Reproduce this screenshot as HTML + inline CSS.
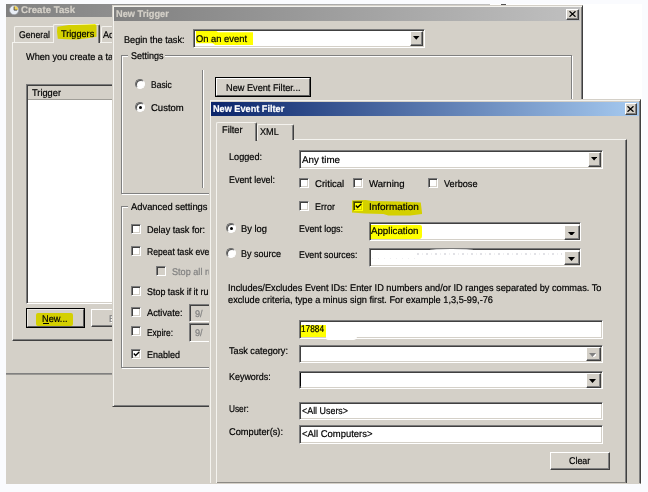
<!DOCTYPE html>
<html lang="en"><head><meta charset="utf-8"><title>Create Task</title>
<style>
*{box-sizing:border-box}
html,body{margin:0;padding:0}
body{width:648px;height:492px;overflow:hidden;background:#fafbfe;position:relative;font-family:"Liberation Sans",sans-serif;font-size:9.75px;color:#000;line-height:12px}
#root{position:absolute;left:0;top:0;width:648px;height:492px;overflow:hidden;background:#fafbfe;filter:blur(0.4px)}
.a{position:absolute}
.win{position:absolute;overflow:hidden;background:#d4d0c8}
.t{position:absolute;white-space:pre;height:12px;line-height:12px;-webkit-text-stroke:0.2px;text-rendering:geometricPrecision;transform-origin:0 0}
.b{font-weight:bold}
.sk{position:absolute;background:#fff;border:1px solid;border-color:#7b7b7b #fff #fff #7b7b7b;box-shadow:inset 1px 1px 0 #404040,inset -1px -1px 0 #d4d0c8}
.rs{position:absolute;background:#d4d0c8;border:1px solid;border-color:#fff #404040 #404040 #fff;box-shadow:inset -1px -1px 0 #808080}
.df{position:absolute;background:#000;}
.cb{position:absolute;width:10px;height:10px;background:#fff;border:1px solid;border-color:#7b7b7b #fff #fff #7b7b7b;box-shadow:inset 1px 1px 0 #404040,inset -1px -1px 0 #d4d0c8}
.rd{position:absolute;width:10px;height:10px;border-radius:50%;background:#fff;border:1px solid;border-color:#6a6a6a #fff #fff #6a6a6a;box-shadow:inset 1px 1px 0 #505050}
.rd i{position:absolute;left:2.5px;top:2.5px;width:3px;height:3px;border-radius:50%;background:#000}
.gb{position:absolute;border:1px solid #808080;box-shadow:1px 1px 0 #fff,inset 1px 1px 0 #fff}
.hl{position:absolute;background:#ffff00;mix-blend-mode:multiply}
.tab{position:absolute;background:#d4d0c8;border:1px solid;border-color:#f4f2ee #404040 transparent #f4f2ee;border-bottom:none;border-radius:2px 2px 0 0;box-shadow:inset -1px 0 0 #808080}
.arr{position:absolute;width:0;height:0;border-left:3px solid transparent;border-right:3px solid transparent;border-top:3px solid #000}
</style></head>
<body>
<div id="root">
<div class="a" style="left:6px;top:4px;width:636px;height:480px;background:#fff"></div>
<div class="win" style="left:6px;top:4px;width:484px;height:480px;">
<div class="a" style="left:0px;top:0px;width:484px;height:13px;background:linear-gradient(to right,#808080,#c0c0c0)"></div>
<svg class="a" style="left:2.5px;top:1.2000000000000002px" width="10.2" height="10.2" viewBox="0 0 10 10"><circle cx="5" cy="5" r="4.5" fill="#e9eef6" stroke="#9a9ca4" stroke-width="0.7"/><path d="M5 5 L5 1 A4 4 0 0 1 9 5 Z" fill="#f0d25a"/><path d="M5 1.6 V5 H8" stroke="#333" stroke-width="0.8" fill="none"/></svg>
<span class="t b" style="left:15px;top:1.00px;transform:scaleX(0.9897);color:#d4d0c8">Create Task</span>
<div class="a" style="left:6px;top:38px;width:472px;height:299px;border:1px solid;border-color:#f4f3ef #404040 #404040 #f4f3ef;box-shadow:inset -1px -1px 0 #808080"></div>
<div class="tab" style="left:8px;top:22px;width:42px;height:16px;"></div>
<span class="t " style="left:13px;top:26.00px;transform:scaleX(0.8937);">General</span>
<div class="tab" style="left:95px;top:22px;width:39px;height:16px;"></div>
<span class="t " style="left:97px;top:26.00px;transform:scaleX(0.94);">Actions</span>
<div class="tab" style="left:47px;top:20px;width:47px;height:19px;"></div>
<div class="hl" style="left:51px;top:20px;width:39.5px;height:15.5px;clip-path:polygon(1% 18%,30% 6%,42% 7%,76% 3%,96% 0,100% 6%,100% 82%,78% 92%,50% 100%,25% 98%,2% 95%,0 50%)"></div>
<span class="t " style="left:54.5px;top:25.00px;transform:scaleX(0.9391);">Triggers</span>
<span class="t " style="left:20px;top:48.00px;transform:scaleX(0.94);">When you create a task, you can specify the conditions that will trigger the task.</span>
<div class="sk" style="left:20px;top:80px;width:454px;height:220px;"></div>
<div class="a" style="left:22px;top:82px;width:462px;height:13.5px;background:#d4d0c8;border-bottom:1px solid #a09e98"></div>
<span class="t " style="left:26px;top:84.00px;transform:scaleX(0.9498);">Trigger</span>
<div class="df" style="left:20px;top:304px;width:59px;height:20px;"></div>
<div class="rs" style="left:21px;top:305px;width:57px;height:18px;border-color:#e9e7e2 #5a5a5a #5a5a5a #e9e7e2;box-shadow:none"></div>
<div class="hl" style="left:30px;top:309px;width:37px;height:13px;border-radius:2px"></div>
<span class="t " style="left:36px;top:310.00px;transform:scaleX(0.9412);">New...</span>
<div class="a" style="left:36.5px;top:319px;width:6.0px;height:1px;background:#000"></div>
<div class="rs" style="left:85px;top:305px;width:57px;height:18px;"></div>
<span class="t " style="left:102.5px;top:310.00px;transform:scaleX(0.94);color:#808080;text-shadow:1px 1px 0 #fff">Edit...</span>
<div class="a" style="left:0px;top:369px;width:484px;height:1px;background:#808080"></div>
<div class="a" style="left:0px;top:370px;width:484px;height:1px;background:#9a9894"></div>
</div>
<div class="a" style="left:501px;top:4px;width:5px;height:1px;background:#555"></div>
<div class="win" style="left:112px;top:5px;width:471px;height:402px;border:1px solid;border-color:#d4d0c8 #404040 #404040 #d4d0c8;box-shadow:inset 1px 1px 0 #f4f3ef,inset -1px -1px 0 #808080">
<div class="a" style="left:1px;top:1px;width:466px;height:14px;background:linear-gradient(to right,#808080,#c0c0c0)"></div>
<span class="t b" style="left:3px;top:3.00px;transform:scaleX(0.9451);color:#d4d0c8">New Trigger</span>
<div class="rs" style="left:453px;top:3px;width:13px;height:11px;"><svg class="a" style="left:2px;top:0.6px" width="7" height="6" viewBox="0 0 7 6"><path d="M0.5 0.3 L6.5 5.7 M6.5 0.3 L0.5 5.7" stroke="#000" stroke-width="1.25" fill="none"/></svg></div>
<span class="t " style="left:11px;top:29.00px;transform:scaleX(0.9380);">Begin the task:</span>
<div class="sk" style="left:80px;top:23px;width:232px;height:19px;"></div>
<div class="hl" style="left:82.6px;top:25px;width:57.400000000000006px;height:14px;clip-path:polygon(0 0,36% 0,39% 9%,100% 9%,100% 100%,34% 100%,30% 88%,0 88%)"></div>
<span class="t " style="left:83px;top:28.00px;transform:scaleX(0.9600);">On an event</span>
<div class="rs" style="left:297px;top:25px;width:13px;height:15px;"></div>
<svg class="a" style="left:300px;top:30.200000000000003px" width="6.5" height="3.8" viewBox="0 0 6.5 3.8"><path d="M0 0H6.5L3.25 3.8Z" fill="#000"/></svg>
<div class="gb" style="left:8px;top:49px;width:451px;height:139px;"></div>
<div class="a" style="left:15px;top:44px;width:37px;height:12px;background:#d4d0c8"></div>
<span class="t " style="left:17.5px;top:45.00px;transform:scaleX(0.9224);">Settings</span>
<div class="rd" style="left:22px;top:73px;"></div>
<span class="t " style="left:38px;top:74.00px;transform:scaleX(0.8702);">Basic</span>
<div class="rd" style="left:22px;top:96px;"><i></i></div>
<span class="t " style="left:38px;top:97.00px;transform:scaleX(0.9749);">Custom</span>
<div class="a" style="left:89px;top:64px;width:1px;height:118px;background:#808080"></div>
<div class="a" style="left:90px;top:64px;width:1px;height:118px;background:#fff"></div>
<div class="df" style="left:102px;top:71px;width:96px;height:20px;"></div>
<div class="rs" style="left:103px;top:72px;width:94px;height:18px;border-color:#fff #5a5a5a #5a5a5a #fff;box-shadow:none"></div>
<span class="t " style="left:113px;top:77.00px;transform:scaleX(0.9417);">New Event Filter...</span>
<div class="gb" style="left:8px;top:200px;width:451px;height:162px;"></div>
<div class="a" style="left:15px;top:195px;width:81px;height:12px;background:#d4d0c8"></div>
<span class="t " style="left:17.5px;top:196.00px;transform:scaleX(0.9600);">Advanced settings</span>
<div class="cb" style="left:18px;top:218px;"></div>
<span class="t " style="left:34px;top:219.00px;transform:scaleX(0.9306);">Delay task for:</span>
<div class="cb" style="left:18px;top:240px;"></div>
<span class="t " style="left:34px;top:241.00px;transform:scaleX(0.8841);">Repeat task every:</span>
<div class="cb" style="left:18px;top:280px;"></div>
<span class="t " style="left:34px;top:281.00px;transform:scaleX(0.9151);">Stop task if it runs longer than:</span>
<div class="cb" style="left:18px;top:301px;"></div>
<span class="t " style="left:34px;top:302.00px;transform:scaleX(0.9490);">Activate:</span>
<div class="cb" style="left:18px;top:320px;"></div>
<span class="t " style="left:34px;top:322.00px;transform:scaleX(0.8564);">Expire:</span>
<div class="cb" style="left:18px;top:343px;"><svg class="a" style="left:1px;top:1px" width="7" height="7" viewBox="0 0 7 7"><path d="M0.8 2.6 L2.6 4.5 L6.2 0.9" fill="none" stroke="#000" stroke-width="1.4"/></svg></div>
<span class="t " style="left:34px;top:344.00px;transform:scaleX(0.9219);">Enabled</span>
<div class="cb" style="left:43px;top:260px;background:#d4d0c8;width:9.5px;height:9.5px"></div>
<span class="t " style="left:59px;top:261.00px;transform:scaleX(0.9354);color:#808080">Stop all running tasks at end of repetition duration</span>
<div class="sk" style="left:76px;top:298px;width:111px;height:18px;background:#d4d0c8"></div>
<span class="t " style="left:81.5px;top:303.00px;transform:scaleX(0.94);color:#808080">9/    4/2013</span>
<div class="sk" style="left:76px;top:317px;width:111px;height:19px;background:#d4d0c8"></div>
<span class="t " style="left:81.5px;top:322.00px;transform:scaleX(0.94);color:#808080">9/    4/2014</span>
</div>
<div class="win" style="left:209px;top:99px;width:432px;height:385px;border:1px solid;border-color:#d4d0c8 #404040 #d4d0c8 #d4d0c8;box-shadow:inset 1px 1px 0 #f4f3ef,inset -1px 0 0 #808080">
<div class="a" style="left:1px;top:2px;width:428px;height:14px;background:linear-gradient(to right,#0a246a,#a6caf0)"></div>
<span class="t b" style="left:2.5px;top:4.00px;transform:scaleX(0.9392);color:#fff">New Event Filter</span>
<div class="rs" style="left:415px;top:3px;width:12px;height:12px;"><svg class="a" style="left:1.3px;top:1.8px" width="7" height="6" viewBox="0 0 7 6"><path d="M0.5 0.3 L6.5 5.7 M6.5 0.3 L0.5 5.7" stroke="#000" stroke-width="1.3" fill="none"/></svg></div>
<div class="a" style="left:6px;top:39px;width:411px;height:361px;border:1px solid;border-color:#f4f3ef #404040 #404040 #f4f3ef;box-shadow:inset -1px -1px 0 #808080"></div>
<div class="a" style="left:7px;top:382px;width:409px;height:2px;background:linear-gradient(#a6a39d,#3a3a3a)"></div>
<div class="tab" style="left:47px;top:24px;width:37px;height:16px;"></div>
<span class="t " style="left:50px;top:27.00px;transform:scaleX(0.9346);">XML</span>
<div class="tab" style="left:6px;top:22px;width:41px;height:19px;"></div>
<span class="t " style="left:12px;top:25.00px;transform:scaleX(0.9459);">Filter</span>
<span class="t " style="left:19px;top:52.00px;transform:scaleX(0.9362);">Logged:</span>
<div class="sk" style="left:89px;top:50px;width:304px;height:19px;"></div>
<span class="t " style="left:92px;top:55.00px;transform:scaleX(1.0016);">Any time</span>
<div class="rs" style="left:378px;top:52px;width:13px;height:15px;"></div>
<svg class="a" style="left:381.29999999999995px;top:57.30000000000001px" width="6.2" height="3.5" viewBox="0 0 6.2 3.5"><path d="M0 0H6.2L3.1 3.5Z" fill="#000"/></svg>
<span class="t " style="left:19px;top:75.00px;transform:scaleX(0.9126);">Event level:</span>
<div class="cb" style="left:89px;top:78px;"></div>
<span class="t " style="left:104.5px;top:79.00px;transform:scaleX(0.9816);">Critical</span>
<div class="cb" style="left:143px;top:78px;"></div>
<span class="t " style="left:159px;top:79.00px;transform:scaleX(0.9874);">Warning</span>
<div class="cb" style="left:218px;top:78px;"></div>
<span class="t " style="left:234px;top:79.00px;transform:scaleX(0.9362);">Verbose</span>
<div class="cb" style="left:89px;top:101px;"></div>
<span class="t " style="left:104.5px;top:102.00px;transform:scaleX(0.9229);">Error</span>
<div class="cb" style="left:143px;top:101px;"><svg class="a" style="left:1px;top:1px" width="7" height="7" viewBox="0 0 7 7"><path d="M0.8 2.6 L2.6 4.5 L6.2 0.9" fill="none" stroke="#000" stroke-width="1.4"/></svg></div>
<span class="t " style="left:159px;top:102.00px;transform:scaleX(1.0199);">Information</span>
<div class="hl" style="left:141.5px;top:100px;width:70.69999999999999px;height:15.599999999999994px;clip-path:polygon(0 3%,20% 0,29% 6%,68% 10%,98% 16%,100% 90%,83% 100%,52% 100%,45% 90%,19% 87%,0 80%)"></div>
<div class="rd" style="left:16px;top:123px;"><i></i></div>
<span class="t " style="left:31px;top:124.00px;transform:scaleX(0.9591);">By log</span>
<div class="rd" style="left:16px;top:148px;"></div>
<span class="t " style="left:31px;top:149.00px;transform:scaleX(0.9225);">By source</span>
<span class="t " style="left:89px;top:124.00px;transform:scaleX(0.9119);">Event logs:</span>
<span class="t " style="left:89px;top:150.00px;transform:scaleX(0.9070);">Event sources:</span>
<div class="sk" style="left:159px;top:122px;width:212px;height:19px;"></div>
<div class="hl" style="left:160.39999999999998px;top:125px;width:52.10000000000002px;height:13.5px;border-radius:0 2px 3px 0"></div>
<span class="t " style="left:160.5px;top:126.00px;transform:scaleX(0.9957);">Application</span>
<div class="rs" style="left:354px;top:125px;width:16px;height:15px;"></div>
<svg class="a" style="left:357.5px;top:131.6px" width="7" height="3.9" viewBox="0 0 7 3.9"><path d="M0 0H7L3.5 3.9Z" fill="#000"/></svg>
<div class="sk" style="left:159px;top:148px;width:212px;height:19px;"></div>
<div class="rs" style="left:354px;top:151px;width:16px;height:14px;"></div>
<svg class="a" style="left:357.5px;top:157px" width="7" height="3.9" viewBox="0 0 7 3.9"><path d="M0 0H7L3.5 3.9Z" fill="#000"/></svg>
<div class="a" style="left:207px;top:153px;width:145px;height:2px;background:repeating-linear-gradient(90deg,rgba(120,120,140,.22) 0 2px,transparent 2px 5px,rgba(120,120,140,.12) 5px 6px,transparent 6px 9px)"></div>
<div class="a" style="left:162px;top:158px;width:48px;height:1px;background:repeating-linear-gradient(90deg,rgba(120,120,140,.12) 0 1px,transparent 1px 6px)"></div>
<div class="a" style="left:220px;top:149px;width:43px;height:2px;background:#fff;border-radius:50% 50% 0 0"></div>
<span class="t " style="left:18px;top:183.00px;transform:scaleX(0.9458);">Includes/Excludes Event IDs: Enter ID numbers and/or ID ranges separated by commas. To</span>
<span class="t " style="left:18px;top:195.00px;transform:scaleX(0.9458);">exclude criteria, type a minus sign first. For example 1,3,5-99,-76</span>
<div class="sk" style="left:89px;top:220px;width:304px;height:19px;"></div>
<div class="hl" style="left:90px;top:225px;width:26.399999999999977px;height:12.300000000000011px;"></div>
<span class="t " style="left:91px;top:224.00px;transform:scaleX(0.8479);">17884</span>
<div class="a" style="left:116px;top:236px;width:31px;height:4px;background:#fff;border-radius:0 0 6px 3px"></div>
<span class="t " style="left:19px;top:246.00px;transform:scaleX(0.9384);">Task category:</span>
<div class="sk" style="left:89px;top:245px;width:304px;height:18px;"></div>
<div class="rs" style="left:376px;top:247px;width:15px;height:14px;"></div>
<svg class="a" style="left:379px;top:253.2px" width="7" height="4" viewBox="0 0 7 4"><path d="M1 1H8L4.5 5Z" fill="#fff"/><path d="M0 0H7L3.5 4Z" fill="#808080"/></svg>
<span class="t " style="left:19px;top:272.00px;transform:scaleX(0.9170);">Keywords:</span>
<div class="sk" style="left:89px;top:271px;width:304px;height:18px;"></div>
<div class="a" style="left:90px;top:273px;width:1px;height:13px;background:#000"></div>
<div class="rs" style="left:376px;top:273px;width:15px;height:15px;"></div>
<svg class="a" style="left:379px;top:279.3px" width="7" height="4" viewBox="0 0 7 4"><path d="M0 0H7L3.5 4Z" fill="#000"/></svg>
<span class="t " style="left:19px;top:304.00px;transform:scaleX(0.8478);">User:</span>
<div class="sk" style="left:89px;top:302px;width:304px;height:18px;"></div>
<span class="t " style="left:92px;top:306.00px;transform:scaleX(0.9126);">&lt;All Users&gt;</span>
<span class="t " style="left:19px;top:327.00px;transform:scaleX(0.9492);">Computer(s):</span>
<div class="sk" style="left:89px;top:325px;width:304px;height:19px;"></div>
<span class="t " style="left:92px;top:329.00px;transform:scaleX(0.9707);">&lt;All Computers&gt;</span>
<div class="rs" style="left:340px;top:352px;width:60px;height:18px;"></div>
<span class="t " style="left:358.70000000000005px;top:356.00px;transform:scaleX(0.9137);">Clear</span>
</div>
</div>
</body></html>
